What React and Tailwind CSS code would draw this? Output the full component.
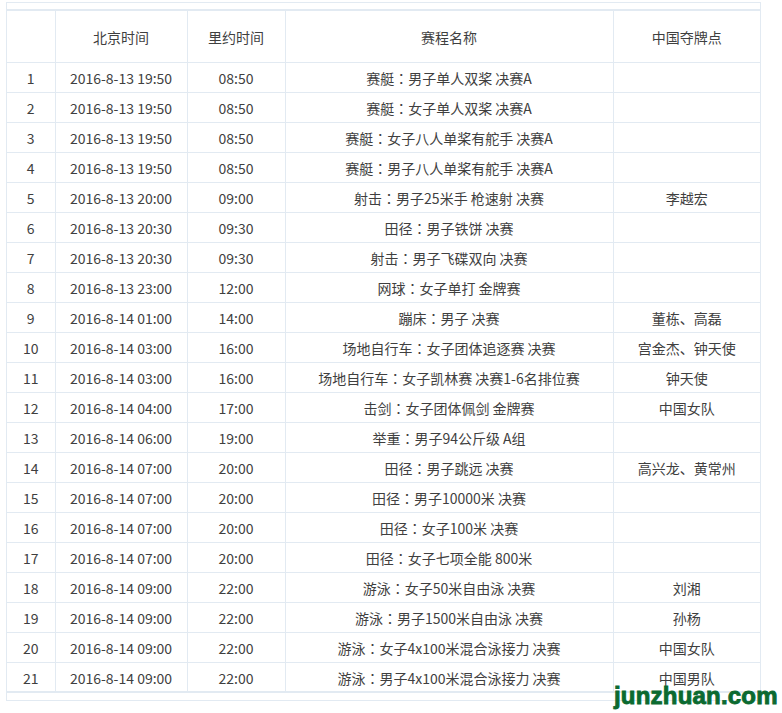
import React from "react";

const rows = [
  ["1", "2016-8-13 19:50", "08:50", "赛艇：男子单人双桨 决赛A", ""],
  ["2", "2016-8-13 19:50", "08:50", "赛艇：女子单人双桨 决赛A", ""],
  ["3", "2016-8-13 19:50", "08:50", "赛艇：女子八人单桨有舵手 决赛A", ""],
  ["4", "2016-8-13 19:50", "08:50", "赛艇：男子八人单桨有舵手 决赛A", ""],
  ["5", "2016-8-13 20:00", "09:00", "射击：男子25米手 枪速射 决赛", "李越宏"],
  ["6", "2016-8-13 20:30", "09:30", "田径：男子铁饼 决赛", ""],
  ["7", "2016-8-13 20:30", "09:30", "射击：男子飞碟双向 决赛", ""],
  ["8", "2016-8-13 23:00", "12:00", "网球：女子单打 金牌赛", ""],
  ["9", "2016-8-14 01:00", "14:00", "蹦床：男子 决赛", "董栋、高磊"],
  ["10", "2016-8-14 03:00", "16:00", "场地自行车：女子团体追逐赛 决赛", "宫金杰、钟天使"],
  ["11", "2016-8-14 03:00", "16:00", "场地自行车：女子凯林赛 决赛1-6名排位赛", "钟天使"],
  ["12", "2016-8-14 04:00", "17:00", "击剑：女子团体佩剑 金牌赛", "中国女队"],
  ["13", "2016-8-14 06:00", "19:00", "举重：男子94公斤级 A组", ""],
  ["14", "2016-8-14 07:00", "20:00", "田径：男子跳远 决赛", "高兴龙、黄常州"],
  ["15", "2016-8-14 07:00", "20:00", "田径：男子10000米 决赛", ""],
  ["16", "2016-8-14 07:00", "20:00", "田径：女子100米 决赛", ""],
  ["17", "2016-8-14 07:00", "20:00", "田径：女子七项全能 800米", ""],
  ["18", "2016-8-14 09:00", "22:00", "游泳：女子50米自由泳 决赛", "刘湘"],
  ["19", "2016-8-14 09:00", "22:00", "游泳：男子1500米自由泳 决赛", "孙杨"],
  ["20", "2016-8-14 09:00", "22:00", "游泳：女子4x100米混合泳接力 决赛", "中国女队"],
  ["21", "2016-8-14 09:00", "22:00", "游泳：男子4x100米混合泳接力 决赛", "中国男队"],
];

const widths = ["w-[48px]", "w-[132px]", "w-[98px]", "w-[328px]", "w-[147px]"];

function Cell({ text }) {
  const i = text.indexOf("：");
  if (i < 0) return text;
  return (
    <>
      {text.slice(0, i)}
      <span style={{ fontFamily: '"Noto Sans CJK TC", sans-serif' }}>：</span>
      {text.slice(i + 1)}
    </>
  );
}

export default function App() {
  return (
    <div
      className="relative w-[782px] h-[713px] bg-white text-[14px] text-[#3f3f3f]"
      style={{ fontFamily: '"Noto Sans CJK SC", "Noto Sans", sans-serif' }}
    >
      <div className="absolute left-0 top-0 pl-[6px] pt-[2px]">
        <div className="w-[755px] border border-[#e2eaf2]">
          <div className="h-[8px] border-b-2 border-[#e2eaf2]" />
          <table className="border-collapse w-full table-fixed">
            <colgroup>
              {widths.map((w, i) => (
                <col key={i} className={w} />
              ))}
            </colgroup>
            <thead>
              <tr className="h-[51px]">
                {["", "北京时间", "里约时间", "赛程名称", "中国夺牌点"].map((h, i) => (
                  <th
                    key={i}
                    className={`font-normal text-center p-0 pt-px border-b border-[#e2eaf2] ${
                      i < 4 ? "border-r" : ""
                    } leading-none`}
                  >
                    {h}
                  </th>
                ))}
              </tr>
            </thead>
            <tbody>
              {rows.map((r, ri) => (
                <tr key={ri} className={ri < rows.length - 1 ? "h-[30px]" : "h-[29px]"}>
                  {r.map((c, ci) => (
                    <td
                      key={ci}
                      className={`text-center p-0 pt-[2px] leading-none whitespace-nowrap border-[#e2eaf2] ${
                        ri < rows.length - 1 ? "border-b" : ""
                      } ${ci < 4 ? "border-r" : ""}`}
                    >
                      <Cell text={c} />
                    </td>
                  ))}
                </tr>
              ))}
            </tbody>
          </table>
          <div className="h-[9px] border-t-2 border-[#e2eaf2]" />
        </div>
      </div>
      <div
        className="absolute left-[614px] top-[684px] text-[24px] font-bold text-[#0b6a30] leading-none [-webkit-text-stroke:0.9px_#0b6a30] tracking-[0.2px]"
        style={{ fontFamily: '"Liberation Sans", Arial, sans-serif' }}
      >
        junzhuan.com
      </div>
    </div>
  );
}
